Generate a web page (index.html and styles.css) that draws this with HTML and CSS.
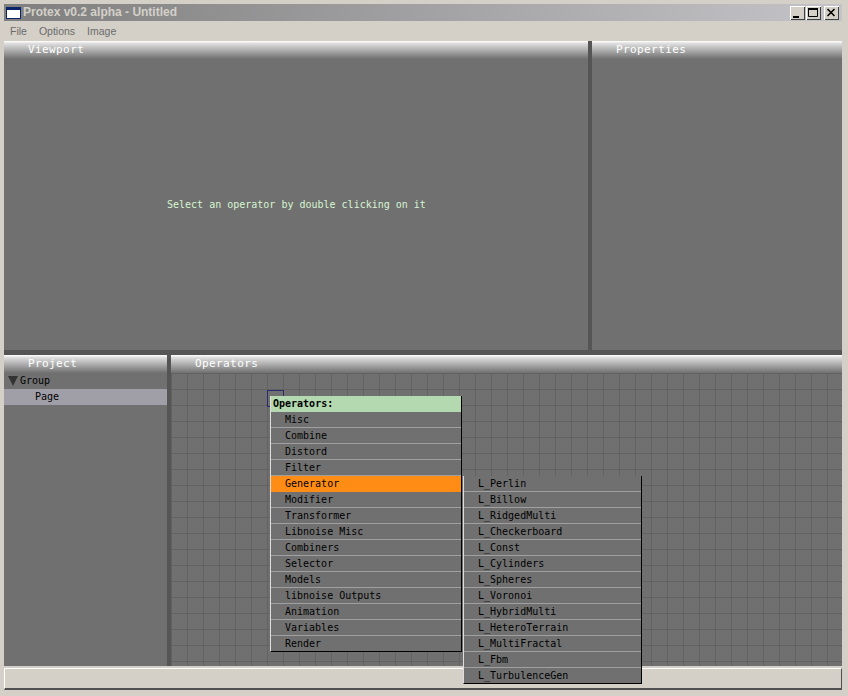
FILE: index.html
```html
<!DOCTYPE html>
<html lang="en">
    <head>
        <meta charset="UTF-8">
        <title>Protex v0.2 alpha - Untitled</title>
        <link rel="stylesheet" href="styles.css">
    </head>
    <body>
        <div class="window">
            <div class="titlebar">
                <svg class="app-icon" width="15" height="12" viewBox="0 0 15 12">
                    <rect width="15" height="12" fill="#0a246a"/>
                    <rect x="1" y="3" width="13" height="8" fill="#fff"/>
                </svg>
                <span class="title-text">Protex v0.2 alpha - Untitled</span>
                <div class="win-buttons">
                    <div class="win-btn">
                        <svg width="15" height="14" viewBox="0 0 15 14"><rect x="3" y="10" width="6" height="2" fill="#000"/></svg>
                    </div>
                    <div class="win-btn">
                        <svg width="15" height="14" viewBox="0 0 15 14"><path d="M2.5 2.5h9v8h-9z" fill="none" stroke="#000"/><rect x="2" y="2" width="10" height="2" fill="#000"/></svg>
                    </div>
                    <div class="win-btn win-close">
                        <svg width="15" height="14" viewBox="0 0 15 14"><path d="M3.5 3l7 7M10.5 3l-7 7" fill="none" stroke="#000" stroke-width="1.6"/></svg>
                    </div>
                </div>
            </div>
            <div class="menubar">
                <span>File</span>
                <span>Options</span>
                <span>Image</span>
            </div>
            <div class="workspace">
                <div class="row row-top">
                    <section class="panel panel-viewport">
                        <div class="panel-head">Viewport</div>
                        <div class="panel-body viewport-body">
                            <p class="hint">Select an operator by double clicking on it</p>
                        </div>
                    </section>
                    <section class="panel panel-properties">
                        <div class="panel-head">Properties</div>
                        <div class="panel-body"></div>
                    </section>
                </div>
                <div class="row row-bottom">
                    <section class="panel panel-project">
                        <div class="panel-head">Project</div>
                        <div class="panel-body tree">
                            <div class="tree-group"><span class="arrow"></span>Group</div>
                            <div class="tree-page">Page</div>
                        </div>
                    </section>
                    <section class="panel panel-operators">
                        <div class="panel-head">Operators</div>
                        <div class="panel-body grid"></div>
                    </section>
                </div>
            </div>
            <div class="statusbar"></div>

            <div class="op-node"></div>
            <ul class="menu menu-main">
                <li class="menu-title">Operators:</li>
                <li>Misc</li>
                <li>Combine</li>
                <li>Distord</li>
                <li>Filter</li>
                <li class="active">Generator</li>
                <li>Modifier</li>
                <li>Transformer</li>
                <li>Libnoise Misc</li>
                <li>Combiners</li>
                <li>Selector</li>
                <li>Models</li>
                <li>libnoise Outputs</li>
                <li>Animation</li>
                <li>Variables</li>
                <li>Render</li>
            </ul>
            <ul class="menu menu-sub">
                <li>L_Perlin</li>
                <li>L_Billow</li>
                <li>L_RidgedMulti</li>
                <li>L_Checkerboard</li>
                <li>L_Const</li>
                <li>L_Cylinders</li>
                <li>L_Spheres</li>
                <li>L_Voronoi</li>
                <li>L_HybridMulti</li>
                <li>L_HeteroTerrain</li>
                <li>L_MultiFractal</li>
                <li>L_Fbm</li>
                <li>L_TurbulenceGen</li>
            </ul>
        </div>
    </body>
</html>
```

FILE: styles.css
```css
html, body {
    margin: 0;
    padding: 0;
    height: 100%;
    overflow: hidden;
}

body {
    background-color: #d4d0c8;
    font-family: "DejaVu Sans Mono", monospace;
    font-size: 10px;
}

.window {
    position: relative;
    width: 848px;
    height: 696px;
    box-sizing: border-box;
    padding: 4px 6px 6px 4px;
    display: flex;
    flex-direction: column;
}

.titlebar {
    height: 17px;
    flex: none;
    display: flex;
    align-items: center;
    padding: 0 3px 0 2px;
    background: linear-gradient(90deg, #7f7f7f, #c4c4c8);
}

.app-icon {
    margin-right: 2px;
}

.title-text {
    margin-bottom: 2px;
    font-family: "Liberation Sans", sans-serif;
    font-size: 12px;
    font-weight: bold;
    color: #d4d0c8;
}

.win-buttons {
    margin-left: auto;
    display: flex;
    gap: 1px;
}

.win-btn {
    width: 15px;
    height: 14px;
    background-color: #d4d0c8;
    box-shadow: inset 1px 1px 0 #fff, inset -1px -1px 0 #404040;
}

.win-btn svg {
    display: block;
}

.win-close {
    margin-left: 2px;
}

.menubar {
    height: 20px;
    flex: none;
    display: flex;
    align-items: center;
    gap: 12px;
    padding-left: 6px;
    font-family: "Liberation Sans", sans-serif;
    font-size: 10.5px;
    color: #6b6b6b;
}

.workspace {
    flex: none;
    height: 625px;
    display: flex;
    flex-direction: column;
    gap: 5px;
    background-color: #555;
}

.row {
    display: flex;
    gap: 4px;
}

.row-top {
    height: 309px;
}

.row-bottom {
    height: 311px;
}

.panel {
    display: flex;
    flex-direction: column;
    background-color: #707070;
}

.panel-viewport {
    width: 584px;
}

.panel-properties {
    width: 250px;
}

.panel-project {
    width: 163px;
}

.panel-operators {
    width: 671px;
}

.panel-head {
    height: 18px;
    flex: none;
    box-sizing: border-box;
    padding: 3px 0 0 24px;
    font-size: 11px;
    letter-spacing: 0.4px;
    line-height: 12px;
    color: #fff;
    background: linear-gradient(#fff, #dcdcdc 15%, #707070);
}

.panel-body {
    flex: 1;
}

.viewport-body {
    position: relative;
}

.hint {
    margin: 0;
    padding: 140px 0 0 163px;
    font-size: 10px;
    line-height: 12px;
    color: #d6f5d0;
}

.tree {
    color: #000;
    line-height: 16px;
}

.tree-group {
    display: flex;
    align-items: center;
    height: 16px;
    padding-left: 4px;
}

.arrow {
    width: 0;
    height: 0;
    margin-right: 2px;
    border-left: 5px solid transparent;
    border-right: 5px solid transparent;
    border-top: 10px solid #333;
}

.tree-page {
    height: 16px;
    padding-left: 31px;
    background-color: #a09fa8;
}

.grid {
    background-color: #707070;
    background-image:
        linear-gradient(90deg, #626262 1px, transparent 1px),
        linear-gradient(#626262 1px, transparent 1px);
    background-size: 16px 16px;
}

.statusbar {
    flex: none;
    height: 22px;
    margin-top: 2px;
    background-color: #d4d0c8;
    border-top: 1px solid #fff;
    border-left: 1px solid #fff;
    border-right: 1px solid #505050;
    border-bottom: 2px solid #505050;
    box-sizing: border-box;
}

.op-node {
    position: absolute;
    left: 267px;
    top: 390px;
    width: 15px;
    height: 15px;
    border: 1px solid #2a2a6e;
}

.menu {
    position: absolute;
    margin: 0;
    padding: 0;
    list-style: none;
    background-color: #707070;
    border-left: 1px solid #ddd;
    border-right: 1px solid #000;
    border-bottom: 1px solid #000;
    color: #000;
    line-height: 15px;
}

.menu li {
    height: 15px;
    padding-left: 14px;
    border-bottom: 1px solid #a0a0a0;
}

.menu-main {
    left: 270px;
    top: 396px;
    width: 190px;
}

.menu-sub {
    left: 463px;
    top: 476px;
    width: 177px;
}

.menu .menu-title {
    padding-left: 2px;
    font-weight: bold;
    background-color: #b4d8b0;
    border-bottom: 0;
    height: 16px;
}

.menu .active {
    background-color: #ff8c14;
    border-bottom: 0;
    height: 16px;
}

.menu li:last-child {
    border-bottom: 0;
}
```
